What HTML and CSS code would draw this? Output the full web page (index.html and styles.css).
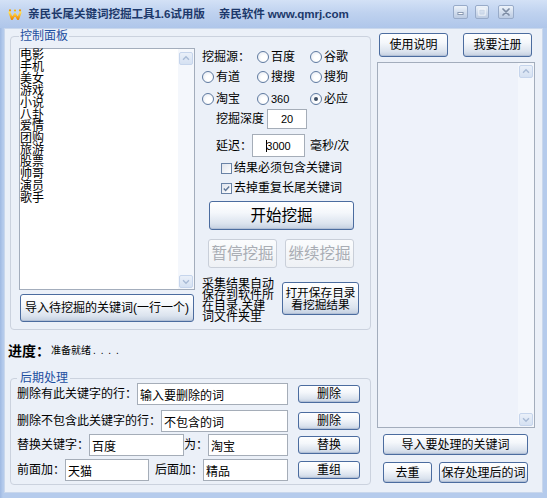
FILE: index.html
```html
<!DOCTYPE html>
<html lang="zh-CN">
<head>
<meta charset="utf-8">
<title>亲民长尾关键词挖掘工具1.6试用版</title>
<link rel="stylesheet" href="styles.css">
</head>
<body>
<div class="window">
  <div class="titlebar">
    <svg class="logo" viewBox="0 0 14 11" aria-hidden="true">
      <defs>
        <linearGradient id="lg" x1="0" y1="0" x2="0" y2="1">
          <stop offset="0" stop-color="#ffe15a"/>
          <stop offset="1" stop-color="#f08a00"/>
        </linearGradient>
      </defs>
      <path d="M1.5 3.5 L4 10 L7 5 L10 10 L12.5 3.5" fill="none" stroke="url(#lg)" stroke-width="2.2" stroke-linejoin="round" stroke-linecap="round"/>
      <circle cx="2" cy="1.3" r="1.1" fill="#f29a00"/>
      <circle cx="7" cy="1.5" r="1.1" fill="#f7b500"/>
      <circle cx="12" cy="1.3" r="1.1" fill="#f29a00"/>
    </svg>
    <span class="title">亲民长尾关键词挖掘工具1.6试用版</span>
    <span class="title title-site">亲民软件 www.qmrj.com</span>
    <div class="winbtns">
      <span class="wbtn wmin"><svg viewBox="0 0 15 14"><rect x="4.5" y="7.5" width="6" height="2.5" fill="#fff" stroke="#7f90aa"/></svg></span>
      <span class="wbtn wmax"><svg viewBox="0 0 14 14"><rect x="3.5" y="3.5" width="7" height="7" fill="none" stroke="#f4f7fb" stroke-width="1.4"/><rect x="4.5" y="5" width="5" height="4.5" fill="none" stroke="#c9d5e6"/></svg></span>
      <span class="wbtn wclose"><svg viewBox="0 0 16 14"><path d="M4.5 3.5 L11.5 10.5 M11.5 3.5 L4.5 10.5" stroke="#7d8ca4" stroke-width="2" stroke-linecap="round"/></svg></span>
    </div>
  </div>
  <div class="frame">
    <div class="client">
      <div class="leftcol">
        <fieldset class="group g1">
          <legend>控制面板</legend>
          <div class="g1-grid">
            <div class="kwcol">
              <div class="listbox kwlist">
                <div class="items">电影<br>手机<br>美女<br>游戏<br>小说<br>八卦<br>爱情<br>团购<br>旅游<br>股票<br>帅哥<br>演员<br>歌手</div>
                <div class="vscroll">
                  <span class="arrow"><svg viewBox="0 0 14 13"><polyline points="3.5,8 7,4.5 10.5,8" fill="none" stroke="#a8bad5" stroke-width="1.6"/></svg></span>
                  <span class="arrow"><svg viewBox="0 0 14 13"><polyline points="3.5,5 7,8.5 10.5,5" fill="none" stroke="#a8bad5" stroke-width="1.6"/></svg></span>
                </div>
              </div>
              <button class="btn btn-import">导入待挖掘的关键词(一行一个)</button>
            </div>
            <div class="ctrlcol">
              <div class="src-grid">
                <span class="src-label">挖掘源：</span>
                <span class="radio-opt"><span class="radio"></span>百度</span>
                <span class="radio-opt"><span class="radio"></span>谷歌</span>
                <span class="radio-opt"><span class="radio"></span>有道</span>
                <span class="radio-opt"><span class="radio"></span>搜搜</span>
                <span class="radio-opt"><span class="radio"></span>搜狗</span>
                <span class="radio-opt"><span class="radio"></span>淘宝</span>
                <span class="radio-opt"><span class="radio"></span><span class="num">360</span></span>
                <span class="radio-opt"><span class="radio on"></span>必应</span>
              </div>
              <div class="field-row depth">
                <span class="flabel">挖掘深度</span>
                <input class="tb tb-num w-depth" type="text" value="20" readonly>
              </div>
              <div class="field-row delay">
                <span class="flabel">延迟：</span>
                <span class="tb tb-num w-delay"><span class="caret"></span>3000</span>
                <span class="unit">毫秒/次</span>
              </div>
              <div class="check-row"><span class="check"></span>结果必须包含关键词</div>
              <div class="check-row second"><span class="check"><svg viewBox="0 0 11 11"><polyline points="2.2,5.6 4.4,7.8 8.8,3" fill="none" stroke="#5e7798" stroke-width="1.7"/></svg></span>去掉重复长尾关键词</div>
              <button class="btn btn-start">开始挖掘</button>
              <div class="pause-row">
                <button class="btn btn-off" disabled>暂停挖掘</button>
                <button class="btn btn-off" disabled>继续挖掘</button>
              </div>
              <div class="save-row">
                <p class="note">采集结果自动保存到软件所在目录,关建词文件夹里</p>
                <button class="btn btn-open">打开保存目录<br>看挖掘结果</button>
              </div>
            </div>
          </div>
        </fieldset>

        <div class="progress"><b>进度：</b><span class="status">准备就绪<span class="dots">....</span></span></div>

        <fieldset class="group g2">
          <legend>后期处理</legend>
          <div class="prow r1">
            <span>删除有此关键字的行：</span>
            <input class="tb grow" type="text" value="输入要删除的词" readonly>
            <button class="btn pbtn">删除</button>
          </div>
          <div class="prow r2">
            <span>删除不包含此关键字的行：</span>
            <input class="tb grow" type="text" value="不包含的词" readonly>
            <button class="btn pbtn">删除</button>
          </div>
          <div class="prow r3">
            <span>替换关键字：</span>
            <input class="tb w-from" type="text" value="百度" readonly>
            <span class="mid">为：</span>
            <input class="tb grow" type="text" value="淘宝" readonly>
            <button class="btn pbtn">替换</button>
          </div>
          <div class="prow r4">
            <span>前面加：</span>
            <input class="tb w-pre" type="text" value="天猫" readonly>
            <span class="mid2">后面加：</span>
            <input class="tb grow" type="text" value="精品" readonly>
            <button class="btn pbtn">重组</button>
          </div>
        </fieldset>
      </div>

      <div class="rightcol">
        <div class="topbtns">
          <button class="btn btn-top">使用说明</button>
          <button class="btn btn-top">我要注册</button>
        </div>
        <div class="listbox outlist">
          <div class="items"></div>
          <div class="vscroll">
            <span class="arrow"><svg viewBox="0 0 14 13"><polyline points="3.5,8 7,4.5 10.5,8" fill="none" stroke="#a8bad5" stroke-width="1.6"/></svg></span>
            <span class="arrow"><svg viewBox="0 0 14 13"><polyline points="3.5,5 7,8.5 10.5,5" fill="none" stroke="#a8bad5" stroke-width="1.6"/></svg></span>
          </div>
        </div>
        <button class="btn btn-imp2">导入要处理的关键词</button>
        <div class="botbtns">
          <button class="btn btn-dedup">去重</button>
          <button class="btn btn-save">保存处理后的词</button>
        </div>
      </div>
    </div>
  </div>
</div>
</body>
</html>
```

FILE: styles.css
```css
* { box-sizing: border-box; }
html, body { margin: 0; padding: 0; }
body {
  width: 547px;
  height: 498px;
  overflow: hidden;
  background: #a9c2e8;
  color: #000;
  font: 12px/14px "Liberation Sans", "Noto Sans CJK SC", sans-serif;
}
.window {
  width: 547px;
  height: 498px;
  display: flex;
  flex-direction: column;
}

/* title bar */
.titlebar {
  height: 28px;
  flex: none;
  display: flex;
  align-items: center;
  padding-left: 8px;
  background: linear-gradient(#d3e1f6, #bfd2ef 45%, #afc6ea);
}
.logo { width: 14px; height: 11px; margin-right: 6px; margin-top: 1px; }
.title {
  font-weight: bold;
  font-size: 11.6px;
  color: #1d396b;
  white-space: pre;
  letter-spacing: -0.1px;
}
.title-site { margin-left: 14px; }
.winbtns {
  margin-left: auto;
  margin-right: 33px;
  align-self: flex-start;
  margin-top: 5px;
  display: flex;
  gap: 7px;
}
.wbtn {
  display: block;
  height: 14px;
  border: 1px solid #98abc9;
  border-radius: 2px;
  background: linear-gradient(#eef3fa, #d3deee 50%, #bccbe2);
}
.wbtn svg { display: block; width: 100%; height: 100%; }
.wmin { width: 15px; }
.wmax { width: 14px; margin-right: 2px; }
.wclose { width: 16px; }

/* frame & client */
.frame {
  flex: 1;
  display: flex;
  padding: 0 4px 5px 4px;
  background: linear-gradient(90deg, #9fb9e2, #b5cbec 3px);
}
.client {
  flex: 1;
  display: flex;
  gap: 6px;
  padding: 1px 0 0 4px;
  background: #ebf0f8;
  box-shadow: inset 0 0 0 1px #c9d7ec;
}
.leftcol {
  width: 363px;
  display: flex;
  flex-direction: column;
}

/* group boxes */
.group {
  margin: 0 0 0 2px;
  width: 361px;
  min-width: 0;
  border: 1px solid #cbd2de;
  border-radius: 4px;
}
.group legend {
  color: #1c4ea0;
  font-size: 12px;
  padding: 0 1px;
}
.g1 { padding: 5px 9px 6px 8px; }
.g1 legend { line-height: 14px; }
.g1-grid {
  display: grid;
  grid-template-columns: 176px 159px;
  column-gap: 7px;
}

/* keyword list */
.kwcol { display: flex; flex-direction: column; }
.listbox {
  display: flex;
  border: 1px solid #a3adbc;
}
.listbox .items { flex: 1; }
.kwlist { height: 242px; background: #fff; }
.kwlist .items { padding-top: 1px; line-height: 11.9px; font-size: 12px; }
.vscroll {
  width: 16px;
  flex: none;
  display: flex;
  flex-direction: column;
  justify-content: space-between;
  padding: 2px 1px 1px;
  background: #f4f7fc;
}
.kwlist .vscroll { padding-top: 3px; }
.arrow {
  display: block;
  width: 14px;
  height: 13px;
  border: 1px solid #c6d5ec;
  border-radius: 2px;
  background: linear-gradient(#eaf0f9, #d5e1f2);
}
.arrow svg { display: block; width: 100%; height: 100%; }

/* buttons */
.btn {
  font: inherit;
  font-size: 12px;
  line-height: 14px;
  color: #000;
  padding: 0;
  border: 1px solid #4b6c9f;
  border-radius: 3px;
  background: linear-gradient(#ffffff 0%, #f4f7fb 40%, #dbe3ee 80%, #c3cfe0 100%);
  box-shadow: inset 0 -1px 0 #b2c0d6;
  white-space: nowrap;
}
.btn-import { margin-top: 4px; height: 28px; width: 174px; margin-left: 1px; }
.btn-start {
  margin: 5px 0 0 7px;
  width: 145px;
  height: 29px;
  font-size: 15.5px;
  line-height: 18px;
}
.pause-row { display: flex; gap: 8px; margin: 9px 0 0 6px; }
.btn-off {
  width: 69px;
  height: 29px;
  font-size: 15.5px;
  line-height: 18px;
  color: #a9adb4;
  border-color: #c9cfd9;
  background: linear-gradient(#fbfcfd, #eef1f5);
  box-shadow: none;
}
.save-row { display: flex; align-items: flex-start; margin-top: 11px; }
.note {
  margin: 0;
  width: 74px;
  font-size: 12px;
  line-height: 11px;
}
.btn-open {
  margin: 3px 0 0 6px;
  width: 77px;
  height: 33px;
  font-size: 11.7px;
  line-height: 12px;
}

/* controls */
.src-grid {
  display: grid;
  grid-template-columns: 55px 53px auto;
  grid-template-rows: 17px 23px 21px;
  align-items: center;
}
.radio-opt { display: flex; align-items: center; }
.radio {
  width: 12px;
  height: 12px;
  margin-right: 2px;
  border: 1px solid #5f7aa0;
  border-radius: 50%;
  background: radial-gradient(circle at 60% 60%, #ffffff 30%, #dfe5ee 100%);
  position: relative;
}
.radio.on::after {
  content: "";
  position: absolute;
  left: 3px;
  top: 3px;
  width: 4px;
  height: 4px;
  border-radius: 50%;
  background: #3d4f66;
}
.num { font-size: 11px; }

.field-row { display: flex; align-items: center; padding-left: 14px; }
.depth { height: 20px; }
.delay { height: 23px; margin-top: 5px; }
.flabel { margin-right: 3px; }
.delay .flabel { margin-right: 0; }
.tb {
  font: inherit;
  font-size: 12px;
  color: #000;
  height: 22px;
  margin: 0;
  padding: 0 2px;
  border: 1px solid #a5adb8;
  background: #fff;
  outline: none;
}
.tb-num { font-size: 11px; text-align: center; }
.w-depth { width: 40px; height: 20px; }
.w-delay {
  width: 53px;
  height: 23px;
  display: flex;
  align-items: center;
  justify-content: center;
}
.caret { width: 1px; height: 12px; background: #000; margin-right: -1px; }
.unit { margin-left: 5px; }

.check-row {
  display: flex;
  align-items: center;
  height: 16px;
  margin-top: 3px;
  padding-left: 19px;
}
.check-row.second { margin-top: 4px; }
.check {
  width: 11px;
  height: 11px;
  margin-right: 2px;
  border: 1px solid #6a83a6;
  background: linear-gradient(135deg, #dfe4ec, #ffffff);
}
.check svg { display: block; width: 100%; height: 100%; }

/* progress */
.progress {
  margin-top: 12px;
  height: 18px;
  line-height: 18px;
  display: flex;
  align-items: center;
}
.progress b { font-size: 14px; font-weight: bold; }
.status { font-size: 10px; margin-left: 1px; }
.dots { letter-spacing: 4.9px; margin-left: 2px; }

/* post processing */
.g2 { margin-top: 12px; padding: 0 10px 3px 6px; }
.g2 legend { line-height: 12px; padding: 0 2px 0 3px; }
.prow { display: flex; align-items: center; height: 22px; }
.prow .tb { height: 22px; }
.r1 { margin-top: -1px; }
.r2 { margin-top: 5px; }
.r3 { margin-top: 2px; }
.r4 { margin-top: 3px; }
.grow { flex: 1; min-width: 0; }
.w-from { width: 95px; }
.w-pre { width: 84px; }
.mid { width: 24px; }
.mid2 { margin-left: 6px; }
.pbtn { margin-left: 10px; width: 62px; height: 18px; flex: none; }

/* right column */
.rightcol {
  width: 158px;
  display: flex;
  flex-direction: column;
  padding-top: 4px;
}
.topbtns {
  display: flex;
  justify-content: space-between;
  padding: 0 3px 0 2px;
}
.btn-top { width: 69px; height: 24px; }
.outlist {
  margin-top: 5px;
  height: 366px;
  background: #eef2fa;
}
.btn-imp2 { margin: 6px 0 0 6px; width: 145px; height: 21px; }
.botbtns { display: flex; gap: 7px; margin: 7px 0 0 6px; }
.btn-dedup { width: 49px; height: 21px; }
.btn-save { width: 89px; height: 21px; }
```
